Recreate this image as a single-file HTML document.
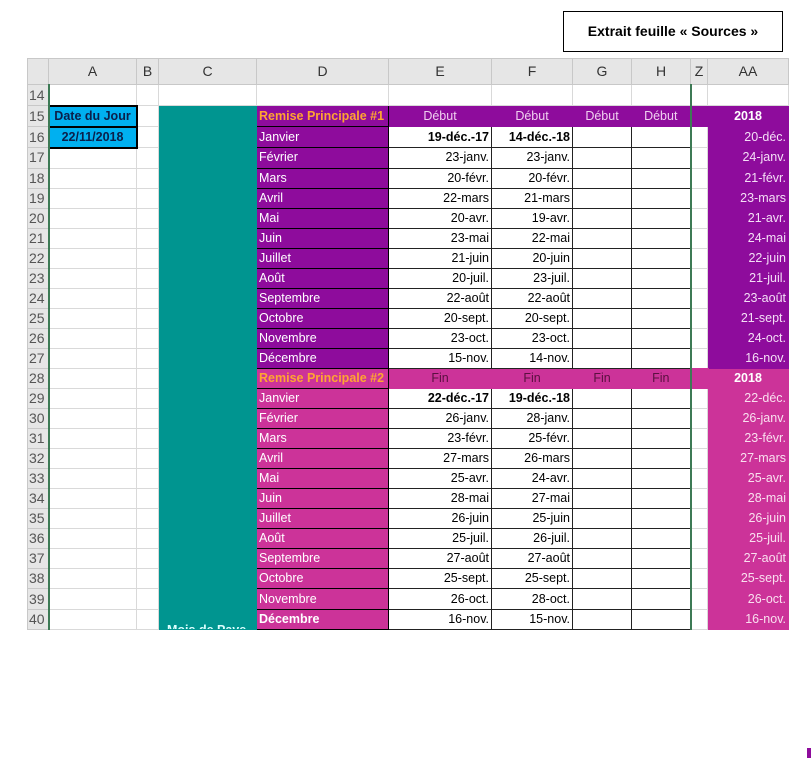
<!DOCTYPE html>
<html><head><meta charset="utf-8"><style>
body{margin:0;width:811px;height:758px;background:#fff;position:relative;overflow:hidden;font-family:"Liberation Sans",sans-serif;}
#box{position:absolute;left:563px;top:11px;width:218px;height:39px;border:1px solid #000;font-weight:bold;font-size:14px;line-height:39px;text-align:center;}
table{position:absolute;left:27px;top:58px;width:761px;border-collapse:collapse;table-layout:fixed;font-size:12.5px;z-index:1}
td{padding:0 2px;border:1px solid #d9d9d9;white-space:nowrap;overflow:hidden;height:19px;line-height:19px;}
tr{height:20.05px}
tr.h td{background:#e6e6e6;text-align:center;color:#333;height:25px;border-color:#c8c8c8;font-size:14px}
td.n{background:#e6e6e6;color:#555;border-color:#c8c8c8;border-right:2px solid #3d7a55;padding-left:1px;font-size:14px}
.t{background:#009590;border-color:#009590}
.p{background:#8e0c9c;color:#fff;border:1px solid #000}
.k{background:#cc3399;color:#fff;border:1px solid #000}
.d{border:1px solid #222;text-align:right}
.b{font-weight:bold}
.ph{background:#8e0c9c !important;color:#f0d0f0;border-color:#8e0c9c;text-align:center}
.kh{background:#cc3399 !important;color:#5a1040;border-color:#cc3399;text-align:center}
.z{border-right:2px solid #3d7a55}
.ap{background:#8e0c9c;color:#f4dff6;text-align:right;border-color:#8e0c9c}
.ak{background:#cc3399;color:#f9e0ef;text-align:right;border-color:#cc3399}
.or{color:#ffa531;font-weight:bold}
.bl{background:#00b0f0;color:#0b1f4a;font-weight:bold;text-align:center;border:2px solid #000}
.ov{position:absolute;z-index:5;left:692px;width:17px;height:20px}
</style></head><body>
<div id="box">Extrait feuille « Sources »</div>
<table>
<colgroup><col style="width:21px"><col style="width:88px"><col style="width:22px"><col style="width:98px"><col style="width:132px"><col style="width:103px"><col style="width:81px"><col style="width:59px"><col style="width:59px"><col style="width:17px"><col style="width:81px"></colgroup>
<tr class="h"><td style="background:#e6e6e6"></td><td>A</td><td>B</td><td>C</td><td>D</td><td>E</td><td>F</td><td>G</td><td>H</td><td>Z</td><td>AA</td></tr>
<tr style="height:21px"><td class="n">14</td><td></td><td></td><td></td><td></td><td></td><td></td><td></td><td class="z"></td><td></td><td></td></tr>
<tr><td class="n">15</td><td class="bl">Date du Jour</td><td></td><td class="t"></td><td class="p or">Remise Principale #1</td><td class="ph">Début</td><td class="ph">Début</td><td class="ph">Début</td><td class="ph z">Début</td><td class="ph">&nbsp;</td><td class="ph b" style="color:#fff">2018</td></tr>
<tr><td class="n">16</td><td class="bl">22/11/2018</td><td></td><td class="t"></td><td class="p">Janvier</td><td class="d b">19-déc.-17</td><td class="d b">14-déc.-18</td><td class="d"></td><td class="d z"></td><td></td><td class="ap">20-déc.</td></tr>
<tr><td class="n">17</td><td></td><td></td><td class="t"></td><td class="p">Février</td><td class="d">23-janv.</td><td class="d">23-janv.</td><td class="d"></td><td class="d z"></td><td></td><td class="ap">24-janv.</td></tr>
<tr><td class="n">18</td><td></td><td></td><td class="t"></td><td class="p">Mars</td><td class="d">20-févr.</td><td class="d">20-févr.</td><td class="d"></td><td class="d z"></td><td></td><td class="ap">21-févr.</td></tr>
<tr><td class="n">19</td><td></td><td></td><td class="t"></td><td class="p">Avril</td><td class="d">22-mars</td><td class="d">21-mars</td><td class="d"></td><td class="d z"></td><td></td><td class="ap">23-mars</td></tr>
<tr><td class="n">20</td><td></td><td></td><td class="t"></td><td class="p">Mai</td><td class="d">20-avr.</td><td class="d">19-avr.</td><td class="d"></td><td class="d z"></td><td></td><td class="ap">21-avr.</td></tr>
<tr><td class="n">21</td><td></td><td></td><td class="t"></td><td class="p">Juin</td><td class="d">23-mai</td><td class="d">22-mai</td><td class="d"></td><td class="d z"></td><td></td><td class="ap">24-mai</td></tr>
<tr><td class="n">22</td><td></td><td></td><td class="t"></td><td class="p">Juillet</td><td class="d">21-juin</td><td class="d">20-juin</td><td class="d"></td><td class="d z"></td><td></td><td class="ap">22-juin</td></tr>
<tr><td class="n">23</td><td></td><td></td><td class="t"></td><td class="p">Août</td><td class="d">20-juil.</td><td class="d">23-juil.</td><td class="d"></td><td class="d z"></td><td></td><td class="ap">21-juil.</td></tr>
<tr><td class="n">24</td><td></td><td></td><td class="t"></td><td class="p">Septembre</td><td class="d">22-août</td><td class="d">22-août</td><td class="d"></td><td class="d z"></td><td></td><td class="ap">23-août</td></tr>
<tr><td class="n">25</td><td></td><td></td><td class="t"></td><td class="p">Octobre</td><td class="d">20-sept.</td><td class="d">20-sept.</td><td class="d"></td><td class="d z"></td><td></td><td class="ap">21-sept.</td></tr>
<tr><td class="n">26</td><td></td><td></td><td class="t"></td><td class="p">Novembre</td><td class="d">23-oct.</td><td class="d">23-oct.</td><td class="d"></td><td class="d z"></td><td></td><td class="ap">24-oct.</td></tr>
<tr><td class="n">27</td><td></td><td></td><td class="t"></td><td class="p">Décembre</td><td class="d">15-nov.</td><td class="d">14-nov.</td><td class="d"></td><td class="d z"></td><td></td><td class="ap">16-nov.</td></tr>
<tr><td class="n">28</td><td></td><td></td><td class="t"></td><td class="k or">Remise Principale #2</td><td class="kh">Fin</td><td class="kh">Fin</td><td class="kh">Fin</td><td class="kh z">Fin</td><td class="kh">&nbsp;</td><td class="kh b" style="color:#fff">2018</td></tr>
<tr><td class="n">29</td><td></td><td></td><td class="t"></td><td class="k">Janvier</td><td class="d b">22-déc.-17</td><td class="d b">19-déc.-18</td><td class="d"></td><td class="d z"></td><td></td><td class="ak">22-déc.</td></tr>
<tr><td class="n">30</td><td></td><td></td><td class="t"></td><td class="k">Février</td><td class="d">26-janv.</td><td class="d">28-janv.</td><td class="d"></td><td class="d z"></td><td></td><td class="ak">26-janv.</td></tr>
<tr><td class="n">31</td><td></td><td></td><td class="t"></td><td class="k">Mars</td><td class="d">23-févr.</td><td class="d">25-févr.</td><td class="d"></td><td class="d z"></td><td></td><td class="ak">23-févr.</td></tr>
<tr><td class="n">32</td><td></td><td></td><td class="t"></td><td class="k">Avril</td><td class="d">27-mars</td><td class="d">26-mars</td><td class="d"></td><td class="d z"></td><td></td><td class="ak">27-mars</td></tr>
<tr><td class="n">33</td><td></td><td></td><td class="t"></td><td class="k">Mai</td><td class="d">25-avr.</td><td class="d">24-avr.</td><td class="d"></td><td class="d z"></td><td></td><td class="ak">25-avr.</td></tr>
<tr><td class="n">34</td><td></td><td></td><td class="t"></td><td class="k">Juin</td><td class="d">28-mai</td><td class="d">27-mai</td><td class="d"></td><td class="d z"></td><td></td><td class="ak">28-mai</td></tr>
<tr><td class="n">35</td><td></td><td></td><td class="t"></td><td class="k">Juillet</td><td class="d">26-juin</td><td class="d">25-juin</td><td class="d"></td><td class="d z"></td><td></td><td class="ak">26-juin</td></tr>
<tr><td class="n">36</td><td></td><td></td><td class="t"></td><td class="k">Août</td><td class="d">25-juil.</td><td class="d">26-juil.</td><td class="d"></td><td class="d z"></td><td></td><td class="ak">25-juil.</td></tr>
<tr><td class="n">37</td><td></td><td></td><td class="t"></td><td class="k">Septembre</td><td class="d">27-août</td><td class="d">27-août</td><td class="d"></td><td class="d z"></td><td></td><td class="ak">27-août</td></tr>
<tr><td class="n">38</td><td></td><td></td><td class="t"></td><td class="k">Octobre</td><td class="d">25-sept.</td><td class="d">25-sept.</td><td class="d"></td><td class="d z"></td><td></td><td class="ak">25-sept.</td></tr>
<tr><td class="n">39</td><td></td><td></td><td class="t"></td><td class="k">Novembre</td><td class="d">26-oct.</td><td class="d">28-oct.</td><td class="d"></td><td class="d z"></td><td></td><td class="ak">26-oct.</td></tr>
<tr><td class="n">40</td><td></td><td></td><td class="t" style="padding:0"><div style="position:relative;height:19px;overflow:hidden"><span style="position:absolute;left:8px;top:11px;color:#dff;font-weight:bold">Mois de Paye</span></div></td><td class="k b">Décembre</td><td class="d">16-nov.</td><td class="d">15-nov.</td><td class="d"></td><td class="d z"></td><td></td><td class="ak">16-nov.</td></tr>
</table>
<div class="ov" style="top:106px;background:#8e0c9c"></div>
<div class="ov" style="top:368px;background:#cc3399"></div>
<div style="position:absolute;left:807px;top:748px;width:4px;height:10px;background:#8e0c9c"></div>
</body></html>
